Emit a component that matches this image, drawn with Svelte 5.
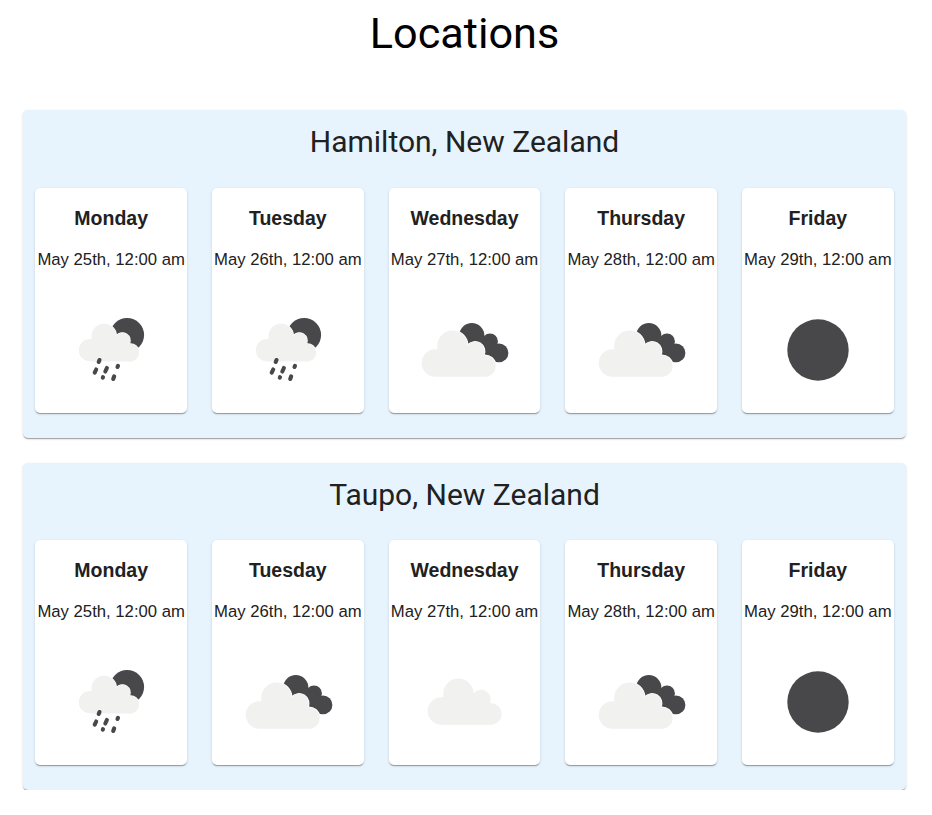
<script>
  const days = [
    ['Monday', 'May 25th, 12:00 am'],
    ['Tuesday', 'May 26th, 12:00 am'],
    ['Wednesday', 'May 27th, 12:00 am'],
    ['Thursday', 'May 28th, 12:00 am'],
    ['Friday', 'May 29th, 12:00 am']
  ];
  const locations = [
    { name: 'Hamilton, New Zealand', icons: ['rain', 'rain', 'broken', 'broken', 'clear'] },
    { name: 'Taupo, New Zealand', icons: ['rain', 'broken', 'cloud', 'broken', 'clear'] }
  ];
</script>

{#snippet cloud()}
  <path d="M21.4 76.8A13.7 13.7 0 0 1 21.4 49.3Q22.7 49.2 23.3 49.4V46.4A15.2 15.2 0 0 1 53.7 45.2A9.6 9.6 0 0 1 69.8 55.3A10.8 10.8 0 1 1 72 76.8Z" />
{/snippet}

{#snippet weather(kind)}
  <svg class="icon" viewBox="0 0 100 100" aria-hidden="true">
    {#if kind === 'rain'}
      <circle class="dark" cx="66.1" cy="35" r="17" />
      <g class="light" transform="translate(11.6 -1.2) scale(.815)">{@render cloud()}</g>
      <path class="drops" d="M38.5 60l-.8 2M35.2 69.5l-1.5 3.2M45.9 68l-1.6 3.5M57 65.8l-.5 1.2M42 77.1l-.2.6M53.2 76.3l-1 2.7" />
    {:else if kind === 'broken'}
      <g class="dark">
        <circle cx="57.8" cy="35.7" r="12.6" />
        <circle cx="76" cy="41.4" r="7.9" />
        <circle cx="85" cy="52.9" r="9.4" />
        <path d="M55 38L69.4 36.4L70 37.2L83 44.2L84 62.2L70 57Z" />
      </g>
      <g class="light">{@render cloud()}</g>
    {:else if kind === 'cloud'}
      <g class="light" transform="translate(6 -4)">{@render cloud()}</g>
    {:else}
      <circle class="dark" cx="50" cy="50" r="30.7" />
    {/if}
  </svg>
{/snippet}

<main>
  <h1>Locations</h1>
  <div class="list">
    {#each locations as place}
      <section>
        <h2>{place.name}</h2>
        <div class="days">
          {#each days as [day, date], i}
            <article>
              <h3>{day}</h3>
              <p>{date}</p>
              {@render weather(place.icons[i])}
            </article>
          {/each}
        </div>
      </section>
    {/each}
  </div>
</main>

<style>
  :global(body) { margin: 0; background: #fff; }
  main { height: 790px; overflow: hidden; text-align: center; }
  h1 { margin: 0; padding: 9px 3px 0 0; height: 110.2px; box-sizing: border-box; font: 400 43.2px/50px Roboto, sans-serif; color: #000; }
  .list { display: flex; flex-direction: column; gap: 24.6px; margin: 0 26.4px 0 23.2px; }
  section { height: 327.8px; flex: none; box-sizing: border-box; padding: 0 11.8px 0 12px; background: #e7f4fe; border-radius: 5px; box-shadow: 0 2px 1px -1px rgba(0,0,0,.2), 0 1px 1px rgba(0,0,0,.14), 0 1px 3px rgba(0,0,0,.12); }
  h2 { margin: 0; height: 77.6px; box-sizing: border-box; padding-top: 12.3px; font: 400 30px/40px Roboto, sans-serif; color: #212121; }
  .days { display: grid; grid-template-columns: repeat(5, 1fr); gap: 24.7px; }
  article { height: 225px; min-width: 0; background: #fff; border-radius: 5px; color: #212121; font-family: "Liberation Sans", Arial, sans-serif; box-shadow: 0 2px 1px -1px rgba(0,0,0,.2), 0 1px 1px rgba(0,0,0,.14), 0 1px 3px rgba(0,0,0,.12); }
  h3 { margin: 0; padding-top: 18px; font-size: 19.5px; line-height: 24px; font-weight: 700; }
  p { margin: 20px 0 0; font-size: 16.7px; line-height: 20px; white-space: nowrap; }
  .icon { display: block; width: 100px; height: 100px; margin: 30px auto 0; }
  .dark { fill: #48484a; }
  .light { fill: #f1f1f0; stroke: #fff; stroke-width: 1.6; paint-order: stroke; }
  .drops { fill: none; stroke: #48484a; stroke-width: 4.1; stroke-linecap: round; }
</style>
